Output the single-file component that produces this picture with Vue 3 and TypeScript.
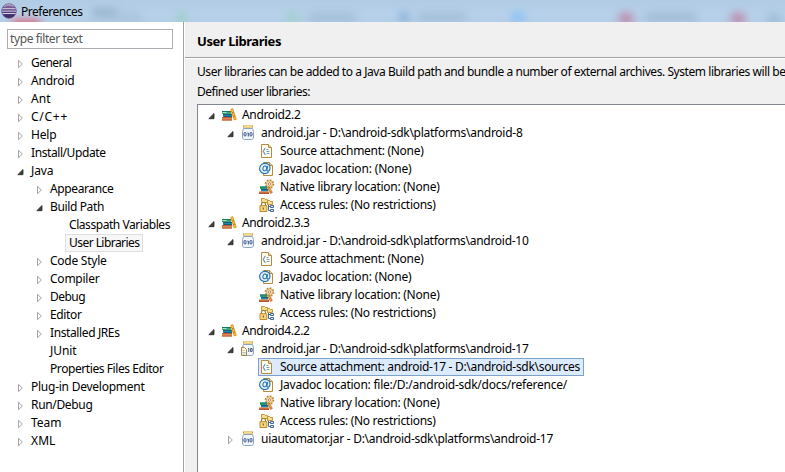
<script setup lang="ts">
import type { Directive } from 'vue'

type Arrow = 'open' | 'closed' | 'none'
type Icon = 'books' | 'jar' | 'jarsrc' | 'source' | 'javadoc' | 'native' | 'access'
interface Row { text: string; level: number; width: number; arrow: Arrow; icon?: Icon; selected?: boolean }

// Spreads the letters of a label over its intended width.
const vFit: Directive<HTMLElement, number> = {
  mounted(el, binding) {
    const natural = el.getBoundingClientRect().width
    const count = (el.textContent ?? '').length
    el.style.letterSpacing = `${(binding.value - natural) / count}px`
  },
}

const r = (text: string, level: number, width: number, arrow: Arrow = 'closed', icon?: Icon, selected = false): Row =>
  ({ text, level, width, arrow, icon, selected })

const pages: Row[] = [
  r('General', 0, 40.5), r('Android', 0, 43.5), r('Ant', 0, 19.5), r('C/C++', 0, 37), r('Help', 0, 25.5),
  r('Install/Update', 0, 74.5), r('Java', 0, 22.5, 'open'),
  r('Appearance', 1, 63.5), r('Build Path', 1, 54, 'open'),
  r('Classpath Variables', 2, 101, 'none'), r('User Libraries', 2, 70.5, 'none', undefined, true),
  r('Code Style', 1, 56.5), r('Compiler', 1, 49.5), r('Debug', 1, 35), r('Editor', 1, 31.5),
  r('Installed JREs', 1, 69.5), r('JUnit', 1, 26.5, 'none'), r('Properties Files Editor', 1, 113.5, 'none'),
  r('Plug-in Development', 0, 113.5), r('Run/Debug', 0, 61.5), r('Team', 0, 30.5), r('XML', 0, 24.5),
]

const details = (): Row[] => [
  r('Javadoc location: (None)', 2, 131.5, 'none', 'javadoc'),
  r('Native library location: (None)', 2, 159.5, 'none', 'native'),
  r('Access rules: (No restrictions)', 2, 155.5, 'none', 'access'),
]
const libraries: Row[] = [
  r('Android2.2', 0, 58.5, 'open', 'books'),
  r('android.jar - D:\\android-sdk\\platforms\\android-8', 1, 261.5, 'open', 'jar'),
  r('Source attachment: (None)', 2, 143.5, 'none', 'source'),
  ...details(),
  r('Android2.3.3', 0, 67.5, 'open', 'books'),
  r('android.jar - D:\\android-sdk\\platforms\\android-10', 1, 267.5, 'open', 'jar'),
  r('Source attachment: (None)', 2, 143.5, 'none', 'source'),
  ...details(),
  r('Android4.2.2', 0, 67.5, 'open', 'books'),
  r('android.jar - D:\\android-sdk\\platforms\\android-17', 1, 267.5, 'open', 'jarsrc'),
  r('Source attachment: android-17 - D:\\android-sdk\\sources', 2, 300, 'none', 'source', true),
  r('Javadoc location: file:/D:/android-sdk/docs/reference/', 2, 287, 'none', 'javadoc'),
  ...details().slice(1),
  r('uiautomator.jar - D:\\android-sdk\\platforms\\android-17', 1, 292, 'closed', 'jar'),
]
</script>

<template>
  <div class="window">
    <header class="titlebar">
      <i class="haze h1"></i><i class="haze h2"></i><i class="haze h3"></i><i class="haze h4"></i><i class="haze h5"></i>
      <i class="haze h6"></i><i class="haze h7"></i><i class="haze h8"></i><i class="haze h9"></i><i class="haze h10"></i>
      <i class="haze h11"></i><i class="haze h12"></i>
      <svg class="logo" width="16" height="16" viewBox="0 0 16 16">
        <defs>
          <linearGradient id="orb" x2="0" y2="1"><stop stop-color="#9b86b4" /><stop offset=".45" stop-color="#53407c" /><stop offset="1" stop-color="#382b66" /></linearGradient>
        </defs>
        <circle cx="8" cy="8" r="7.3" fill="url(#orb)" stroke="#705f94" stroke-width=".8" />
        <path d="M1.5 5.7h13M1 8.1h14M1.5 10.5h13" stroke="#dcd5ea" stroke-width="1" />
        <path d="M3.4 3.4Q8 0 12.6 3.4" fill="none" stroke="#c1b3cf" />
      </svg>
      <span v-fit="61.5" class="label">Preferences</span>
    </header>
    <main class="body">
      <aside class="side">
        <div class="filter"><span v-fit="72.5" class="label">type filter text</span></div>
        <div class="tree pages">
          <div v-for="(row, i) in pages" :key="i" class="row" :class="'lv' + row.level">
            <svg class="arrow" width="8" height="10" viewBox="0 0 8 10">
              <path v-if="row.arrow === 'closed'" d="M1.5 1.3v7.4L5.3 5z" fill="#fff" stroke="#a5a5a5" />
              <path v-else-if="row.arrow === 'open'" d="M6 2.5v5.2H.8z" fill="#404040" stroke="#262626" stroke-width=".8" />
            </svg>
            <span class="cell" :class="{ current: row.selected }"><span v-fit="row.width" class="label">{{ row.text }}</span></span>
          </div>
        </div>
      </aside>
      <section class="content">
        <div class="heading"><span v-fit="84" class="label">User Libraries</span></div>
        <div class="page">
          <div class="line"><span v-fit="588.5" class="label">User libraries can be added to a Java Build path and bundle a number of external archives. System libraries will be</span></div>
          <div class="line second"><span v-fit="113" class="label">Defined user libraries:</span></div>
          <div class="tree libs">
            <div v-for="(row, i) in libraries" :key="i" class="row" :class="'lv' + row.level">
              <svg class="arrow" width="8" height="10" viewBox="0 0 8 10">
                <path v-if="row.arrow === 'closed'" d="M1.5 1.3v7.4L5.3 5z" fill="#fff" stroke="#a5a5a5" />
                <path v-else-if="row.arrow === 'open'" d="M6 2.5v5.2H.8z" fill="#404040" stroke="#262626" stroke-width=".8" />
              </svg>
              <span class="cell" :class="{ chosen: row.selected }">
                <svg class="icon" width="16" height="16" viewBox="0 0 16 16">
                  <g v-if="row.icon === 'books'">
                    <path d="M1 4h9v3H1z" fill="#3aa57c" /><path d="M1 4.5h9" stroke="#1c7a5c" /><path d="M1.5 5.5h4" stroke="#a5dcb9" />
                    <path d="M2 7h9v3H2z" fill="#2485a0" /><path d="M2 7.5h9M3 9.5h8" stroke="#17607c" />
                    <path d="M1 10h10v3.5H1z" fill="#e08a58" /><path d="M1 10.5h10M1 13h10" stroke="#b95a30" />
                    <path d="M9.8 2.4l1.9-.8 3.5 10.6-2 .8z" fill="#f8bf3c" stroke="#dd9518" stroke-width=".9" /><path d="M10.8 6l2-.7M12 9.6l2-.7" stroke="#c86e20" />
                  </g>
                  <g v-else-if="row.icon === 'jar' || row.icon === 'jarsrc'">
                    <path d="M3.5 3.5h9c0 1.2 1 1.6 1 3v5.5c0 1.7-.8 2.5-2.2 2.5H4.7C3.3 14.5 2.5 13.7 2.5 12V6.5c0-1.4 1-1.8 1-3z" fill="#f3f8fd" stroke="#8ba4bf" />
                    <path d="M3 1.5h10" stroke="#c89825" stroke-width="2" /><path d="M4 1.5h8" stroke="#f5df88" />
                    <g v-if="row.icon === 'jar'" fill="none" stroke="#213e77" stroke-width=".9">
                      <rect x="4" y="7.5" width="2" height="3.5" rx=".9" /><path d="M7.4 8h.9v3.5" /><rect x="10" y="7.5" width="2" height="3.5" rx=".9" />
                    </g>
                    <g v-else>
                      <path d="M8 7.5h.8V11M10.6 7.5h1.5v3h-1.5z" fill="none" stroke="#344a78" stroke-width=".9" />
                      <path d="M1.5 6.5h3l2 2v6h-5z" fill="#fff9df" stroke="#a38449" /><path d="M2.5 9.5h2M2.5 11.5h3M2.5 13h3" stroke="#9cb0c4" stroke-width=".8" />
                    </g>
                  </g>
                  <g v-else-if="row.icon === 'source'">
                    <path d="M2.5 1.5h7l3 3v10h-10z" fill="#fffbed" stroke="#b48b43" /><path d="M9.5 1.5v3h3" fill="#ecd99c" stroke="#b48b43" />
                    <path d="M6.4 5.3c-1.6 0-.9 2.2-2.2 3 1.3.8.6 3.3 2.2 3.3" fill="none" stroke="#2d639c" stroke-width="1" />
                    <path d="M7.5 6.5h2M7.5 8.5h3M7.5 10.5h3" stroke="#7ba0c4" />
                  </g>
                  <g v-else-if="row.icon === 'javadoc'">
                    <path d="M4.5 1.5h6l3 3v10h-9z" fill="#fffbed" stroke="#b48b43" /><path d="M10.5 1.5v3h3" fill="#ecd99c" stroke="#b48b43" />
                    <circle cx="5.8" cy="7.5" r="5.3" fill="#e6f2fa" />
                    <path d="M9.6 11.2C5.3 14.2.6 11.8.6 7.6c0-3.2 2.5-5.2 5.4-5.2 3.2 0 5 2 5 4.6 0 2-1.1 3.1-2.1 3.1-1 0-1.1-.8-.9-1.7l.7-3.2" fill="none" stroke="#2472af" stroke-width="1.1" />
                    <ellipse cx="5.8" cy="7.4" rx="1.9" ry="2.4" fill="none" stroke="#2472af" transform="rotate(15 5.8 7.4)" />
                  </g>
                  <g v-else-if="row.icon === 'native'">
                    <circle cx="10.5" cy="5" r="4" fill="#f4dda3" stroke="#b98643" stroke-width="1.6" stroke-dasharray="1.7 1.4" />
                    <circle cx="10.5" cy="5" r="3" fill="#f8e6b8" stroke="#c79a5b" stroke-width=".7" /><circle cx="10.5" cy="5" r="1.2" fill="#fff" stroke="#a66d2d" stroke-width=".8" />
                    <path d="M1 7.5h7v2.5H1z" fill="#2c9a7e" /><path d="M1 8h7" stroke="#1b7a62" />
                    <path d="M2 10h7v2.5H2z" fill="#2485a4" /><path d="M2 10.5h7" stroke="#17607f" />
                    <path d="M0 12.5h10v2.3H0z" fill="#d87344" /><path d="M0 14.3h10" stroke="#a94a28" />
                    <path d="M8.5 8.5l1.7-.7 3.1 5.7-1.9.9z" fill="#f0a23a" stroke="#c5672a" stroke-width=".8" />
                  </g>
                  <g v-else-if="row.icon === 'access'">
                    <path d="M2.5 1.5h3l1 1h2v3h-6zM8.5 3.5h2l1 1h2v3h-5z" fill="#f8dc8e" stroke="#c4973c" />
                    <path d="M9.5 8v5.5H12M9.5 9.5H12" fill="none" stroke="#426b95" />
                    <path d="M11.5 8.5h3v2h-3zM11.5 12.5h3v2h-3z" fill="#d9ecfb" stroke="#426b95" />
                    <path d="M2.5 9V7.5a2 2 0 0 1 4 0V9" fill="none" stroke="#9b792f" stroke-width="1.1" />
                    <path d="M1 8.7h6.8v5.8H1z" fill="#f8d67a" stroke="#b98a30" /><path d="M4.4 10.5v2" stroke="#8d611d" stroke-width="1.3" />
                  </g>
                </svg>
                <span v-fit="row.width" class="label">{{ row.text }}</span>
              </span>
            </div>
          </div>
        </div>
      </section>
    </main>
  </div>
</template>

<style>
body { margin: 0; overflow: hidden; }
</style>

<style scoped>
.window { width: 785px; height: 472px; display: flex; flex-direction: column; overflow: hidden; font: 12px/18px "Noto Sans", "Open Sans", sans-serif; color: #000; background: #f0f0f0; box-sizing: border-box; }
.label { display: inline-block; white-space: pre; font-size: 12px; }
.titlebar { position: relative; overflow: hidden; height: 22px; flex: none; display: flex; align-items: center; gap: 4px; padding-left: 1px; box-sizing: border-box; background: linear-gradient(#b1cbe4, #b7d1ea 65%, #b5cee7); }
.logo, .titlebar .label { position: relative; flex: none; }
.titlebar .label { padding-top: 1px; }
.logo { margin-top: -1px; }
.haze { position: absolute; top: 13px; height: 8px; width: 48px; background: #829eb9; filter: blur(4px); opacity: .4; }
.h1 { left: 12px; top: 20px; width: 28px; background: #e65267; opacity: .95; }
.h2 { left: 92px; top: 9px; width: 25px; opacity: .65; }
.h3 { left: 118px; width: 23px; opacity: .3; }
.h4 { left: 177px; width: 10px; background: #7fcaa5; opacity: .6; }
.h5 { left: 287px; width: 12px; background: #86cfac; opacity: .6; }
.h6 { left: 308px; }
.h7 { left: 399px; width: 10px; background: #5f91c5; opacity: .6; }
.h8 { left: 418px; }
.h9 { left: 511px; width: 14px; background: #75bcfc; opacity: .8; }
.h10 { left: 619px; width: 14px; height: 11px; background: #c25d84; opacity: .6; }
.h11 { left: 645px; width: 52px; opacity: .45; }
.h12 { left: 731px; width: 14px; height: 11px; background: #c25d84; opacity: .6; box-shadow: 36px 0 0 0 #92b0cd; }
.body { display: flex; flex: 1; min-height: 0; }
.side { width: 184px; flex: none; box-sizing: border-box; background: #fff; border-right: 1px solid #a0a0a0; padding: 7px 0 0 7px; }
.filter { width: 166px; height: 20px; box-sizing: border-box; border: 1px solid #abadb3; padding-left: 2px; color: #555; display: flex; align-items: center; }
.pages { padding: 5px 0 0 10px; }
.row { height: 18px; display: flex; align-items: center; }
.lv1 { padding-left: 19px; }
.lv2 { padding-left: 38px; }
.arrow { flex: none; margin-top: 2px; }
.pages .arrow { margin-top: 1px; }
.libs .arrow { margin-top: 1px; }
.cell { height: 18px; display: flex; align-items: center; box-sizing: border-box; border: 1px solid transparent; }
.pages .cell { margin-left: 2px; padding: 0 2px 0 3px; }
.current { background: #f7f7f7; border-color: #dedede; }
.content { flex: 1; min-width: 0; display: flex; flex-direction: column; border-left: 1px solid #fff; }
.heading { height: 36px; flex: none; box-sizing: border-box; border-bottom: 1px solid #a0a0a0; padding: 2px 0 0 12px; display: flex; align-items: center; font-weight: 700; }
.heading .label { font-size: 13px; }
.page { flex: 1; min-height: 0; display: flex; flex-direction: column; border-top: 1px solid #fff; padding: 4px 0 0 12px; white-space: nowrap; }
.line { height: 20px; line-height: 18px; flex: none; }
.line .label { vertical-align: top; }
.second { height: 21px; }
.libs { flex: 1; min-height: 0; overflow: hidden; background: #fff; border: 1px solid #828790; border-right: 0; border-bottom: 0; padding: 1px 0 0 10px; }
.libs .cell { margin-left: 4px; padding: 0 3px 0 0; }
.icon { flex: none; margin-right: 5px; }
.libs .cell.chosen { background: #dcebfc; border-color: #7da2ce; }
</style>
